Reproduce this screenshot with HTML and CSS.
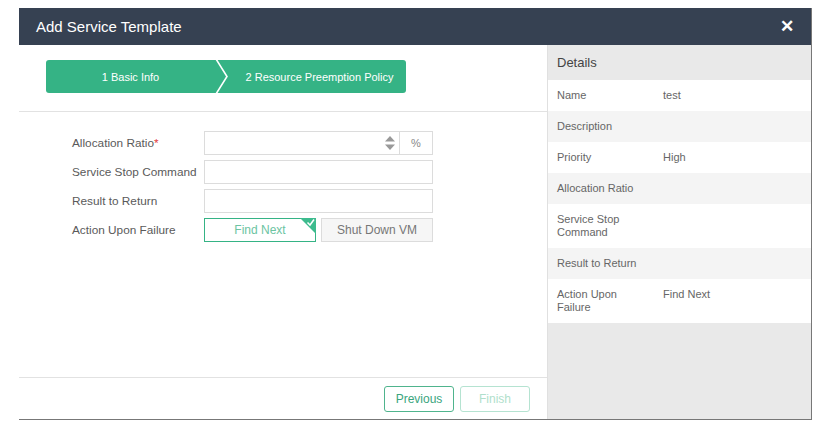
FILE: index.html
```html
<!DOCTYPE html>
<html lang="en">
<head>
    <meta charset="UTF-8">
    <title>Add Service Template</title>
    <link rel="stylesheet" href="styles.css">
</head>
<body>
    <div class="modal">
        <!-- Header -->
        <div class="modal-header">
            <h2>Add Service Template</h2>
            <span class="close-btn">&#10005;</span>
        </div>

        <div class="modal-body">
            <!-- Wizard pane -->
            <div class="wizard">
                <div class="steps-wrap">
                    <div class="steps">
                        <div class="step">1 Basic Info</div>
                        <svg class="step-sep" width="14" height="33" viewBox="0 0 14 33">
                            <polyline points="1,-1 12,16.5 1,34" fill="none" stroke="#fff" stroke-width="1.6"/>
                        </svg>
                        <div class="step step-current">2 Resource Preemption Policy</div>
                    </div>
                </div>

                <div class="form">
                    <div class="form-row">
                        <label>Allocation Ratio<span class="req">*</span></label>
                        <div class="input-group">
                            <div class="spin-input">
                                <input type="text">
                                <svg class="spinner" width="10" height="16" viewBox="0 0 10 16">
                                    <polygon points="5,1 10,6.5 0,6.5" fill="#999"/>
                                    <polygon points="0,9.5 10,9.5 5,15" fill="#999"/>
                                </svg>
                            </div>
                            <span class="addon">%</span>
                        </div>
                    </div>
                    <div class="form-row">
                        <label>Service Stop Command</label>
                        <input type="text" class="text-input">
                    </div>
                    <div class="form-row">
                        <label>Result to Return</label>
                        <input type="text" class="text-input">
                    </div>
                    <div class="form-row">
                        <label>Action Upon Failure</label>
                        <div class="choice-group">
                            <button class="choice choice-on">
                                Find Next
                                <svg class="tick" width="16" height="16" viewBox="0 0 16 16">
                                    <polygon points="0,0 16,0 16,16" fill="#3dbb8e"/>
                                    <polyline points="7.5,4.5 10,7 14,1.5" fill="none" stroke="#fff" stroke-width="1.5"/>
                                </svg>
                            </button>
                            <button class="choice">Shut Down VM</button>
                        </div>
                    </div>
                </div>

                <div class="wizard-footer">
                    <button class="btn">Previous</button>
                    <button class="btn btn-disabled">Finish</button>
                </div>
            </div>

            <!-- Details pane -->
            <div class="details">
                <div class="details-title">Details</div>
                <div class="detail-row"><span class="d-label">Name</span><span class="d-value">test</span></div>
                <div class="detail-row alt"><span class="d-label">Description</span><span class="d-value"></span></div>
                <div class="detail-row"><span class="d-label">Priority</span><span class="d-value">High</span></div>
                <div class="detail-row alt"><span class="d-label">Allocation Ratio</span><span class="d-value"></span></div>
                <div class="detail-row"><span class="d-label">Service Stop Command</span><span class="d-value"></span></div>
                <div class="detail-row alt"><span class="d-label">Result to Return</span><span class="d-value"></span></div>
                <div class="detail-row"><span class="d-label">Action Upon Failure</span><span class="d-value">Find Next</span></div>
            </div>
        </div>
    </div>
</body>
</html>
```

FILE: styles.css
```css
:root {
    --header-color: #364152;
    --green: #35b385;
    --green-text: #6cc4a2;
    --border-color: #dcdcdc;
    --label-color: #5a5a5a;
}

* {
    margin: 0;
    padding: 0;
    box-sizing: border-box;
    font-family: 'Liberation Sans', Arial, sans-serif;
}

body {
    background: #fff;
    padding: 8px 0 0 19px;
}

.modal {
    width: 793px;
    height: 412px;
    display: flex;
    flex-direction: column;
    border-right: 1px solid #777;
    border-bottom: 1px solid #777;
}

.modal-header {
    height: 37px;
    background: var(--header-color);
    display: flex;
    align-items: center;
    justify-content: space-between;
    padding: 0 17px 0 17px;
}

.modal-header h2 {
    color: #fff;
    font-size: 15px;
    font-weight: normal;
}

.close-btn {
    color: #fff;
    font-size: 17px;
    font-weight: bold;
}

.modal-body {
    flex: 1;
    display: flex;
}

.wizard {
    width: 528px;
    display: flex;
    flex-direction: column;
}

.steps-wrap {
    padding: 15px 0 18px 27px;
    border-bottom: 1px solid #e2e2e2;
}

.steps {
    width: 360px;
    height: 33px;
    background: var(--green);
    border-radius: 3px;
    display: flex;
    align-items: center;
}

.step {
    color: #fff;
    font-size: 11px;
    text-align: center;
}

.step:first-child {
    width: 169px;
}

.step-sep {
    display: block;
}

.step-current {
    flex: 1;
    padding-left: 4px;
}

.form {
    flex: 1;
    padding: 19px 0 0 53px;
    display: flex;
    flex-direction: column;
    gap: 5px;
}

.form-row {
    display: flex;
    align-items: center;
    height: 24px;
}

.form-row label {
    width: 132px;
    font-size: 11.8px;
    color: var(--label-color);
}

.req {
    color: #e23c3c;
}

.input-group {
    display: flex;
    width: 229px;
    height: 24px;
}

.spin-input {
    flex: 1;
    display: flex;
    align-items: center;
    border: 1px solid var(--border-color);
    padding-right: 4px;
}

.spin-input input {
    flex: 1;
    min-width: 0;
    height: 100%;
    border: none;
}

.addon {
    width: 33px;
    border: 1px solid var(--border-color);
    border-left: none;
    font-size: 11px;
    color: #888;
    display: flex;
    align-items: center;
    justify-content: center;
}

.text-input {
    width: 229px;
    height: 24px;
    border: 1px solid var(--border-color);
}

.choice-group {
    display: flex;
    gap: 5px;
}

.choice {
    position: relative;
    width: 112px;
    height: 24px;
    font-size: 12px;
    color: #777;
    background: #f6f6f6;
    border: 1px solid var(--border-color);
}

.choice-on {
    color: var(--green-text);
    background: #fff;
    border-color: var(--green);
}

.tick {
    position: absolute;
    top: -1px;
    right: -1px;
}

.wizard-footer {
    height: 42px;
    border-top: 1px solid #e2e2e2;
    display: flex;
    justify-content: flex-end;
    align-items: center;
    gap: 6px;
    padding: 1px 17px 0 0;
}

.btn {
    width: 70px;
    height: 26px;
    background: #fff;
    border: 1px solid #4fb48d;
    border-radius: 3px;
    color: #3aa57e;
    font-size: 12px;
}

.btn-disabled {
    border-color: #b5e3d1;
    color: #b0dfcc;
}

.details {
    flex: 1;
    background: #e9e9e9;
    border-left: 1px solid #e0e0e0;
}

.details-title {
    height: 35px;
    padding: 0 9px;
    display: flex;
    align-items: center;
    font-size: 13px;
    color: #444;
}

.detail-row {
    display: flex;
    background: #fff;
    padding: 9px 9px;
    min-height: 31px;
    font-size: 11px;
    color: #666;
    line-height: 13px;
}

.detail-row.alt {
    background: #f4f4f4;
}

.d-label {
    width: 106px;
    padding-right: 20px;
}
```
